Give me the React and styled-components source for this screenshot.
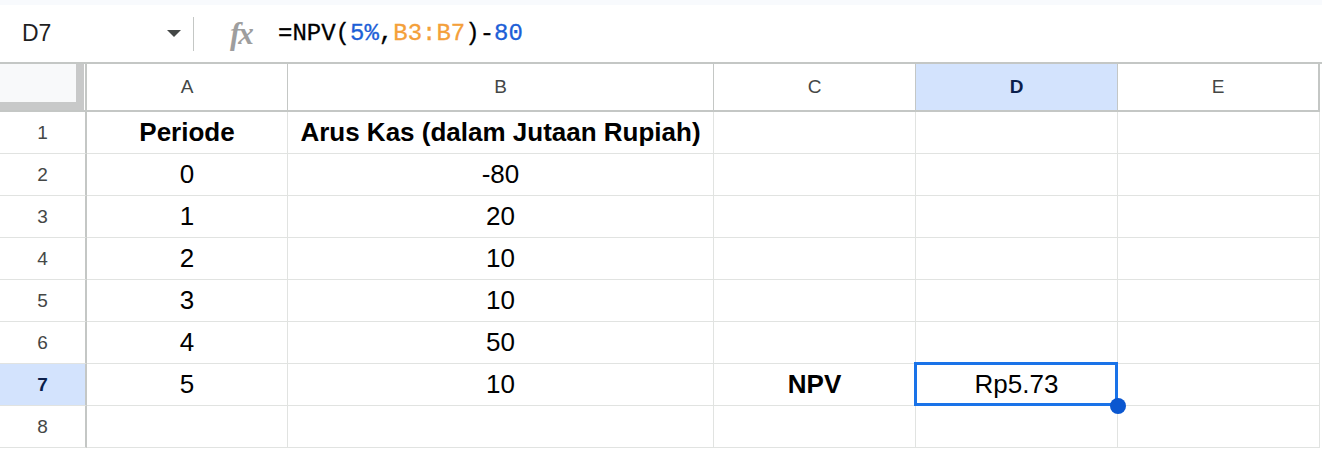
import React from "react";
import styled, { createGlobalStyle } from "styled-components";

const COLUMNS = ["A", "B", "C", "D", "E"];

const ROWS = [
  { cells: ["Periode", "Arus Kas (dalam Jutaan Rupiah)", "", "", ""], bold: [0, 1] },
  { cells: ["0", "-80", "", "", ""] },
  { cells: ["1", "20", "", "", ""] },
  { cells: ["2", "10", "", "", ""] },
  { cells: ["3", "10", "", "", ""] },
  { cells: ["4", "50", "", "", ""] },
  { cells: ["5", "10", "NPV", "Rp5.73", ""], bold: [2] },
  { cells: ["", "", "", "", ""] },
];

const SELECTED = { row: 7, col: "D" };

function App() {
  return (
    <Page>
      <GlobalStyle />
      <TopStrip />
      <FormulaBar>
        <NameBox>
          <span>D7</span>
          <Caret />
        </NameBox>
        <Divider />
        <FxIcon>fx</FxIcon>
        <Formula>
          =NPV(<Num>5%</Num>,<Range>B3:B7</Range>)-<Num>80</Num>
        </Formula>
      </FormulaBar>

      <Sheet>
        <Corner />
        {COLUMNS.map((c, i) => (
          <ColHead key={c} active={c === SELECTED.col} last={i === COLUMNS.length - 1}>
            {c}
          </ColHead>
        ))}

        {ROWS.map((row, r) => {
          const num = r + 1;
          return (
            <React.Fragment key={num}>
              <RowHead active={num === SELECTED.row}>{num}</RowHead>
              {row.cells.map((val, c) => {
                const isSel = num === SELECTED.row && COLUMNS[c] === SELECTED.col;
                return (
                  <Cell key={c} bold={row.bold && row.bold.includes(c)} selected={isSel}>
                    {val}
                    {isSel && (
                      <>
                        <SelectionBox />
                        <FillHandle />
                      </>
                    )}
                  </Cell>
                );
              })}
            </React.Fragment>
          );
        })}
      </Sheet>
    </Page>
  );
}

const GlobalStyle = createGlobalStyle`
  body {
    margin: 0;
    background: #ffffff;
    font-family: "Liberation Sans", Arial, sans-serif;
  }
`;

const Page = styled.div`
  width: 1322px;
  height: 450px;
  overflow: hidden;
  background: #ffffff;
`;

const TopStrip = styled.div`
  height: 5px;
  background: #f8fafd;
`;

const FormulaBar = styled.div`
  height: 57px;
  display: flex;
  align-items: center;
`;

const NameBox = styled.div`
  width: 193px;
  box-sizing: border-box;
  padding: 0 12px 0 22px;
  display: flex;
  align-items: center;
  justify-content: space-between;
  font-size: 23px;
  color: #1f1f1f;
`;

const Caret = styled.span`
  width: 0;
  height: 0;
  border-left: 7px solid transparent;
  border-right: 7px solid transparent;
  border-top: 7px solid #444746;
`;

const Divider = styled.div`
  width: 1px;
  height: 34px;
  background: #c4c7c5;
`;

const FxIcon = styled.span`
  margin-left: 36px;
  width: 48px;
  font-family: "Liberation Serif", "Times New Roman", serif;
  font-style: italic;
  font-weight: bold;
  font-size: 31px;
  line-height: 1;
  color: #9e9e9e;
  letter-spacing: -2px;
`;

const Formula = styled.div`
  font-family: "Liberation Mono", "Courier New", monospace;
  font-size: 24px;
  font-weight: 500;
  color: #000000;
  -webkit-text-stroke: 0.3px currentColor;
`;

const Num = styled.span`
  color: #1d5fd7;
`;

const Range = styled.span`
  color: #f4a03a;
`;

const Sheet = styled.div`
  display: grid;
  grid-template-columns: 87px 201px 426px 202px 202px 202px;
  grid-template-rows: 48px repeat(8, 42px);
  border-top: 2px solid #c4c7c5;
`;

const Corner = styled.div`
  background: #f8f9fa;
  border-right: 2px solid #c4c7c5;
  border-bottom: 2px solid #c4c7c5;
  box-shadow: inset -1px 0 0 #ffffff, inset -9px 0 0 #c8c9c9, inset 0 -8px 0 #c8c9c9;
`;

const ColHead = styled.div`
  display: flex;
  align-items: center;
  justify-content: center;
  font-size: 19px;
  background: ${(p) => (p.active ? "#d3e3fd" : "#ffffff")};
  color: ${(p) => (p.active ? "#0b1f4c" : "#444746")};
  font-weight: ${(p) => (p.active ? "bold" : "normal")};
  border-right: ${(p) => (p.last ? "2px" : "1px")} solid #c4c7c5;
  border-bottom: 2px solid #c4c7c5;
`;

const RowHead = styled.div`
  display: flex;
  align-items: center;
  justify-content: center;
  font-size: 19px;
  background: ${(p) => (p.active ? "#d3e3fd" : "#ffffff")};
  color: ${(p) => (p.active ? "#0b1f4c" : "#444746")};
  font-weight: ${(p) => (p.active ? "bold" : "normal")};
  border-right: 2px solid #c4c7c5;
  border-bottom: 1px solid #e1e3e1;
`;

const Cell = styled.div`
  position: relative;
  z-index: ${(p) => (p.selected ? 2 : "auto")};
  display: flex;
  align-items: center;
  justify-content: center;
  font-size: 26px;
  font-weight: ${(p) => (p.bold ? "bold" : "normal")};
  color: #000000;
  border-right: 1px solid #e1e3e1;
  border-bottom: 1px solid #e1e3e1;
  white-space: nowrap;
`;

const SelectionBox = styled.div`
  position: absolute;
  top: -2px;
  left: -2px;
  right: -1px;
  bottom: -1px;
  border: 3px solid #1a73e8;
  pointer-events: none;
`;

const FillHandle = styled.div`
  position: absolute;
  right: -9px;
  bottom: -9px;
  width: 16px;
  height: 16px;
  border-radius: 50%;
  background: #0b57d0;
`;

export default App;
